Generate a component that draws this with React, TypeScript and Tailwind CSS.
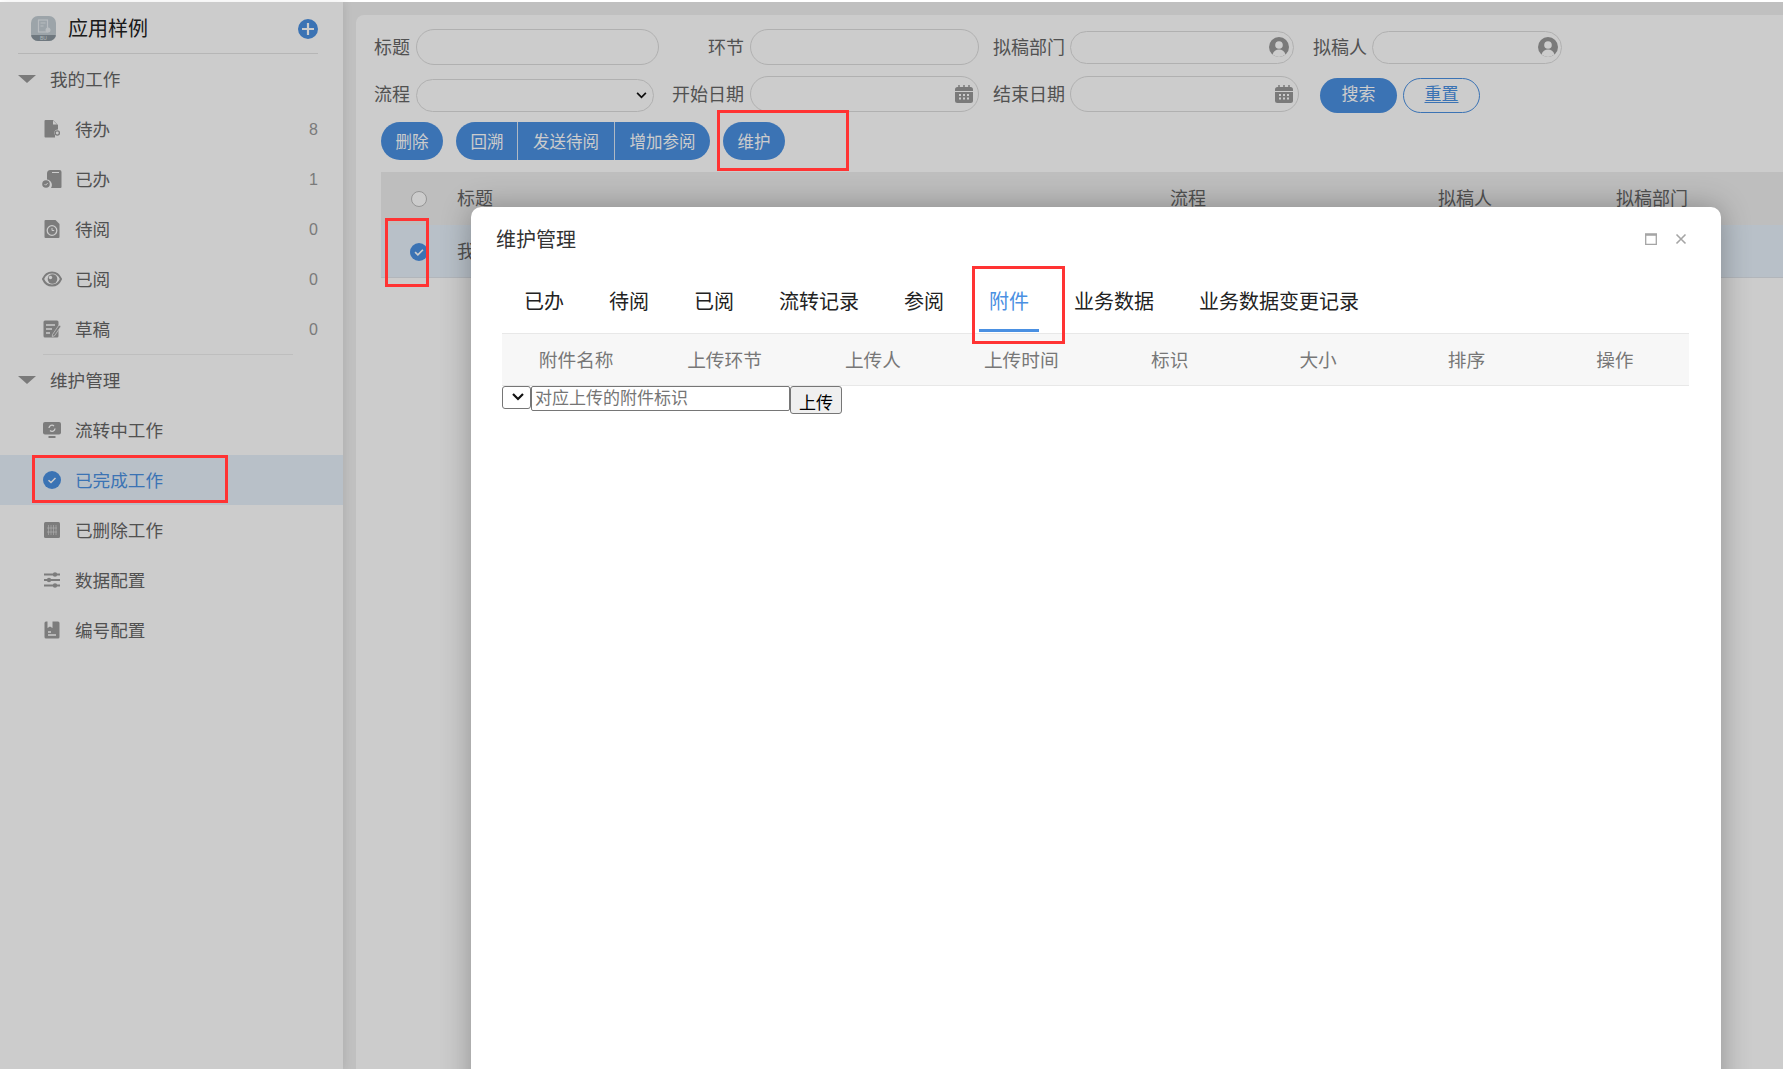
import React from "react";

function Ic({ children, className = "" }: { children: React.ReactNode; className?: string }) {
  return (
    <svg viewBox="0 0 20 20" className={"w-5 h-5 shrink-0 " + className} fill="#9c9c9c">
      {children}
    </svg>
  );
}

const icons: Record<string, React.ReactNode> = {
  todo: (
    <Ic>
      <path d="M2.500 2a1 1 0 0 1 1-1h7.500l5 5v4.500a3.400 3.400 0 0 0-3 5.500v2.500H3.500a1 1 0 0 1-1-1z" />
      <path d="M11 1.500v4h4z" fill="#fff" />
      <circle cx="15.300" cy="14" r="2.100" fill="none" stroke="#9c9c9c" strokeWidth="1.300" />
    </Ic>
  ),
  done: (
    <Ic>
      <path d="M5 4.500a3.500 3.500 0 0 1 3.500-3.500h9a2 2 0 0 1 2 2v15a1 1 0 0 1-1 1H9a5.500 5.500 0 0 0-4-8.500z" />
      <rect x="10" y="3" width="7" height="1" fill="#fff" />
      <circle cx="4" cy="15" r="3.800" />
      <path d="M2.500 15l1.200 1.200L5.700 14" stroke="#fff" fill="none" strokeWidth="0.900" />
    </Ic>
  ),
  wait: (
    <Ic>
      <path d="M2.500 2a1 1 0 0 1 1-1h10l4 4v13a1 1 0 0 1-1 1h-13a1 1 0 0 1-1-1z" />
      <circle cx="10" cy="11.500" r="4.800" fill="none" stroke="#fff" strokeWidth="1.300" />
      <path d="M10 9v2.500h2.200" fill="none" stroke="#fff" strokeWidth="1" />
    </Ic>
  ),
  read: (
    <Ic>
      <path d="M1 10c1.800-4.200 5.200-6.500 9-6.500s7.200 2.300 9 6.500c-1.800 4.200-5.200 6.500-9 6.500s-7.200-2.300-9-6.500z" fill="none" stroke="#9c9c9c" strokeWidth="2" />
      <circle cx="10.500" cy="10" r="4.800" />
      <circle cx="8.500" cy="8.500" r="1.700" fill="#fff" />
    </Ic>
  ),
  draft: (
    <Ic>
      <path d="M1.500 3a1.500 1.500 0 0 1 1.500-1.500h12A1.500 1.500 0 0 1 16.500 3v14a1.500 1.500 0 0 1-1.500 1.500H3A1.500 1.500 0 0 1 1.500 17z" />
      <path d="M4 6h9M4 10h6M4 14h4" stroke="#fff" strokeWidth="1.400" />
      <path d="M10.500 15.500l6.500-9.500 2 1.300-6.500 9.500-2.200 .8z" stroke="#fff" strokeWidth="0.700" />
    </Ic>
  ),
  flow: (
    <Ic>
      <rect x="1" y="2" width="18" height="12.500" rx="2" />
      <rect x="6.500" y="16" width="7" height="2" />
      <path d="M7 8a3 3 0 0 1 5-2M13 8.500a3 3 0 0 1-5 2" fill="none" stroke="#fff" strokeWidth="1.300" />
    </Ic>
  ),
  check: (
    <Ic>
      <circle cx="10" cy="10" r="9" fill="#4a90e2" />
      <path d="M6.500 10.200l2.500 2.300 4.500-4.500" fill="none" stroke="#fff" strokeWidth="1.500" />
    </Ic>
  ),
  trash: (
    <Ic>
      <rect x="2" y="2" width="16" height="16" rx="1.500" />
      <path d="M6.500 5v10M9 5v10M11.500 5v10M14 5v10M5 8h10M5 12h10" stroke="#d8d8d8" strokeWidth="0.700" />
    </Ic>
  ),
  sliders: (
    <Ic>
      <path d="M2 4.500h16M2 10h16M2 15.500h16" stroke="#9c9c9c" strokeWidth="1.800" />
      <circle cx="13" cy="4.500" r="2.200" />
      <circle cx="7" cy="10" r="2.200" />
      <circle cx="13" cy="15.500" r="2.200" />
    </Ic>
  ),
  number: (
    <Ic>
      <path d="M2.500 3a1.500 1.500 0 0 1 1.500-1.500h1.500V8l2.500-1.500L10.500 8V1.500h5.500A1.500 1.500 0 0 1 17.500 3v14a1.500 1.500 0 0 1-1.500 1.500H4A1.500 1.500 0 0 1 2.500 17z" />
      <path d="M6 12h3M6 15h8" stroke="#fff" strokeWidth="1.300" />
    </Ic>
  ),
};

function Caret() {
  return <div className="w-0 h-0 border-x-[9px] border-x-transparent border-t-[8px] border-t-[#999]" />;
}

function GroupHead({ label }: { label: string }) {
  return (
    <div className="h-[50px] flex items-center pl-[18px] gap-[14px] text-[17.6px] text-[#666]">
      <Caret />
      <span className="pt-[2px]">{label}</span>
    </div>
  );
}

function SideItem({ icon, label, count, active }: { icon: string; label: string; count?: string; active?: boolean }) {
  return (
    <div
      className={
        "h-[50px] flex items-center pl-[42px] pr-[25px] gap-[13px] text-[17.6px] " +
        (active ? "bg-[#e6f0fb] text-[#4a90e2]" : "text-[#666]")
      }
    >
      {icons[icon]}
      <span className="flex-1 pt-[2px]">{label}</span>
      {count && <span className="pt-[2px] text-[16px] text-[#999]">{count}</span>}
    </div>
  );
}

function Sidebar() {
  return (
    <aside className="w-[343px] shrink-0 bg-white shadow-[2px_0_8px_rgba(0,0,0,0.08)] z-10">
      <div className="ml-[18px] mr-[25px] h-[52px] pt-[2px] flex items-center border-b border-[#e4e4e4]">
        <div className="ml-[13px] w-[25px] h-[25px] rounded-[7px] bg-[#c3cdd4] overflow-hidden flex flex-col items-center justify-end">
          <svg viewBox="0 0 14 15" className="w-[14px] h-[15px] mb-[1px]">
            <rect x="1.500" y="1" width="9" height="12" fill="none" stroke="#e6ecef" strokeWidth="1.200" />
            <path d="M3.500 4h5M3.500 7h3" stroke="#e6ecef" strokeWidth="1" />
            <circle cx="11" cy="11" r="2.500" fill="#e6ecef" />
          </svg>
          <div className="w-full h-[6px] bg-[#8b979f] text-[5px] leading-[6px] text-center text-[#dfe5e9]">BU</div>
        </div>
        <span className="ml-[12px] flex-1 text-[20px] text-[#222]">应用样例</span>
        <svg viewBox="0 0 20 20" className="w-5 h-5">
          <circle cx="10" cy="10" r="10" fill="#4a90e2" />
          <path d="M10 4v12M4 10h12" stroke="#fff" strokeWidth="2.200" />
        </svg>
      </div>
      <GroupHead label="我的工作" />
      <SideItem icon="todo" label="待办" count="8" />
      <SideItem icon="done" label="已办" count="1" />
      <SideItem icon="wait" label="待阅" count="0" />
      <SideItem icon="read" label="已阅" count="0" />
      <SideItem icon="draft" label="草稿" count="0" />
      <div className="ml-[43px] mr-[50px] border-t border-[#eee]" />
      <GroupHead label="维护管理" />
      <SideItem icon="flow" label="流转中工作" />
      <SideItem icon="check" label="已完成工作" active />
      <SideItem icon="trash" label="已删除工作" />
      <SideItem icon="sliders" label="数据配置" />
      <SideItem icon="number" label="编号配置" />
    </aside>
  );
}

function Person() {
  return (
    <svg viewBox="0 0 20 20" className="w-5 h-5 shrink-0">
      <circle cx="10" cy="10" r="10" fill="#999" />
      <circle cx="10" cy="8" r="3.800" fill="#fff" />
      <path d="M3.500 17.500c1-3.500 3.500-5 6.500-5s5.500 1.500 6.500 5a10 10 0 0 1-13 0z" fill="#fff" />
    </svg>
  );
}

function Calendar() {
  return (
    <svg viewBox="0 0 20 20" className="w-5 h-5 shrink-0">
      <rect x="1" y="3" width="18" height="16" rx="2.500" fill="#999" />
      <path d="M5 1v4M10 1v4M15 1v4" stroke="#999" strokeWidth="1.500" />
      <path d="M1 7.500h18" stroke="#fff" strokeWidth="1" />
      <path d="M5 11h2M9 11h2M13 11h2M5 14.500h2M9 14.500h2M13 14.500h2" stroke="#fff" strokeWidth="1.800" />
    </svg>
  );
}

function Field({ label, labelW, inputW, icon }: { label: string; labelW: string; inputW: string; icon?: React.ReactNode }) {
  return (
    <div className="flex items-center">
      <span className={labelW + " pt-[2px] text-right text-[18px] text-[#666] mr-[6px] whitespace-nowrap"}>{label}</span>
      <div className={inputW + " h-[33px] rounded-[18px] border border-[#ddd] flex items-center justify-end pr-[3px] bg-white"}>
        {icon}
      </div>
    </div>
  );
}

function Btn({ children, cls }: { children: React.ReactNode; cls: string }) {
  return <div className={"h-[38px] pt-[2px] bg-[#4a90e2] text-white text-[16.5px] flex items-center justify-center " + cls}>{children}</div>;
}

function Main() {
  return (
    <main className="flex-1 min-w-0 bg-[#f0f0f0] pl-[13px] pt-[13px]">
      <div className="h-full bg-white rounded-tl-[8px] pt-[14px]">
        {/* search row 1 */}
        <div className="flex items-center h-[36px] pl-[18px]">
          <span className="w-[36px] pt-[2px] text-[18px] text-[#666] mr-[6px]">标题</span>
          <div className="w-[243px] h-[36px] rounded-[18px] border border-[#ddd]" />
          <span className="ml-[50px] w-[36px] pt-[2px] text-[18px] text-[#666] mr-[5px] -translate-x-[1px]">环节</span>
          <div className="w-[229px] h-[36px] rounded-[18px] border border-[#ddd]" />
          <div className="ml-[14px]">
            <Field label="拟稿部门" labelW="w-[71px]" inputW="w-[224px] pr-[4px]" icon={<Person />} />
          </div>
          <div className="ml-[19px]">
            <Field label="拟稿人" labelW="w-[53px]" inputW="w-[190px]" icon={<Person />} />
          </div>
        </div>
        {/* search row 2 */}
        <div className="flex items-center h-[36px] pl-[18px] mt-[11px]">
          <span className="w-[36px] pt-[2px] text-[18px] text-[#666] mr-[6px]">流程</span>
          <div className="w-[238px] h-[33px] rounded-[17px] border border-[#ddd] flex items-center justify-end pr-[4px] mt-[2px]">
            <svg viewBox="0 0 12 8" className="w-[11px] h-[7px] mr-[2px]">
              <path d="M1 1l5 5 5-5" fill="none" stroke="#111" strokeWidth="2" />
            </svg>
          </div>
          <span className="ml-[18px] w-[72px] pt-[2px] text-[18px] text-[#666] mr-[6px] whitespace-nowrap">开始日期</span>
          <div className="w-[229px] h-[36px] rounded-[18px] border border-[#ddd] flex items-center justify-end pr-[4px]">
            <Calendar />
          </div>
          <span className="ml-[14px] w-[71px] pt-[2px] text-[18px] text-[#666] mr-[6px] whitespace-nowrap">结束日期</span>
          <div className="w-[229px] h-[36px] rounded-[18px] border border-[#ddd] flex items-center justify-end pr-[4px]">
            <Calendar />
          </div>
          <div className="ml-[21px] mt-[2px] w-[77px] h-[35px] rounded-[18px] bg-[#4a90e2] text-white text-[17px] flex items-center justify-center">搜索</div>
          <div className="ml-[6px] mt-[2px] w-[77px] h-[35px] rounded-[18px] border border-[#4a90e2] text-[#4a90e2] text-[17px] flex items-center justify-center underline underline-offset-2 decoration-1">重置</div>
        </div>
        {/* actions */}
        <div className="flex items-center pl-[25px] mt-[10px]">
          <Btn cls="w-[62px] rounded-[19px]">删除</Btn>
          <div className="flex ml-[13px] rounded-[19px] overflow-hidden">
            <Btn cls="w-[61px] pl-[1px]">回溯</Btn>
            <Btn cls="w-[97px] border-l border-[#dce8f5]">发送待阅</Btn>
            <Btn cls="w-[96px] border-l border-[#dce8f5]">增加参阅</Btn>
          </div>
          <Btn cls="ml-[13px] w-[62px] rounded-[19px]">维护</Btn>
        </div>
        {/* table */}
        <div className="ml-[25px] mt-[12px] text-[18px] text-[#666]">
          <div className="h-[53px] bg-[#eeeeee] flex items-center">
            <span className="ml-[30px] w-4 h-4 rounded-full border border-[#bbb] bg-white" />
            <span className="ml-[30px] pt-[2px] w-[713px]">标题</span>
            <span className="pt-[2px] w-[268px]">流程</span>
            <span className="pt-[2px] w-[178px]">拟稿人</span>
            <span className="pt-[2px]">拟稿部门</span>
          </div>
          <div className="h-[53px] pt-[2px] bg-[#e6f0fb] flex items-center border-b border-[#dfe4ea]">
            <svg viewBox="0 0 16 16" className="ml-[29px] w-[18px] h-[18px]">
              <circle cx="8" cy="8" r="8" fill="#4a90e2" />
              <path d="M4.500 8.200l2.500 2.300 4.500-4.500" fill="none" stroke="#fff" strokeWidth="1.500" />
            </svg>
            <span className="ml-[29px]">我的样例</span>
          </div>
        </div>
      </div>
    </main>
  );
}

const tabs = ["已办", "待阅", "已阅", "流转记录", "参阅", "附件", "业务数据", "业务数据变更记录"];
const cols = ["附件名称", "上传环节", "上传人", "上传时间", "标识", "大小", "排序", "操作"];

function Modal() {
  return (
    <div className="absolute left-[471px] top-[205px] w-[1250px] h-[900px] bg-white rounded-[10px] shadow-[0_0_30px_rgba(0,0,0,0.3)]">
      <div className="h-[64px] flex items-center pl-[25px] pr-[34px] text-[20px] text-[#333]">
        <span className="flex-1 pt-[2px]">维护管理</span>
        <svg viewBox="0 0 12 12" className="w-3 h-3 -mt-[1px]">
          <path d="M.7 1.500h10.600v10H.7z" fill="none" stroke="#a5a5a5" strokeWidth="1.300" />
          <path d="M0 1.500h12" stroke="#a5a5a5" strokeWidth="2.400" />
        </svg>
        <svg viewBox="0 0 12 12" className="w-3 h-3 ml-[18px] -mt-[1px]">
          <path d="M1.500 1.500l9 9M10.500 1.500l-9 9" stroke="#a5a5a5" strokeWidth="1.600" />
        </svg>
      </div>
      <div className="ml-[31px] mr-[32px]">
        <div className="flex gap-[25px] pl-[12px] h-[62px]">
          {tabs.map((t) => (
            <div
              key={t}
              className={
                "h-[61px] px-[10px] pt-[16px] text-[20px] leading-[30px] whitespace-nowrap " +
                (t === "附件" ? "text-[#4a90e2] border-b-[3px] border-[#4a90e2]" : "text-[#222]")
              }
            >
              {t}
            </div>
          ))}
        </div>
        <div className="grid grid-cols-8 h-[53px] pt-[4px] bg-[#f7f7f7] border-y border-[#e8e8e8] items-center text-[18.7px] text-[#777] text-center">
          {cols.map((c) => (
            <span key={c}>{c}</span>
          ))}
        </div>
        <div className="flex items-start">
          <div className="relative w-[29px] h-[23px]">
            <select className="appearance-none w-full h-full border border-[#767676] rounded-[3px] bg-white" />
            <svg viewBox="0 0 12 8" className="absolute left-[10px] top-[7px] w-[12px] h-[8px] pointer-events-none">
              <path d="M1 1l5 5 5-5" fill="none" stroke="#111" strokeWidth="2.200" />
            </svg>
          </div>
          <input
            placeholder="对应上传的附件标识"
            className="w-[259px] h-[25px] border border-[#767676] rounded-[2px] pl-[3px] text-[17px] placeholder:text-[#757575]"
          />
          <button className="w-[52px] h-[28px] pt-[4px] border border-[#767676] rounded-[3px] bg-[#efefef] text-[17px] text-black">上传</button>
        </div>
      </div>
    </div>
  );
}

function RedBox({ cls }: { cls: string }) {
  return <div className={"absolute border-[3px] border-[#ff3333] pointer-events-none " + cls} />;
}

export default function App() {
  return (
    <div className="w-[1783px] h-[1069px] overflow-hidden bg-white pt-[2px] [font-family:'Liberation_Sans','Noto_Sans_CJK_SC',sans-serif]">
      <div className="relative h-[1067px] flex">
        <Sidebar />
        <Main />
        <div className="absolute inset-0 bg-black/20 z-20" />
        <div className="absolute inset-0 z-30">
          <Modal />
          <RedBox cls="left-[32px] top-[453px] w-[196px] h-[48px]" />
          <RedBox cls="left-[717px] top-[108px] w-[132px] h-[61px]" />
          <RedBox cls="left-[385px] top-[216px] w-[44px] h-[69px]" />
          <RedBox cls="left-[972px] top-[264px] w-[93px] h-[78px]" />
        </div>
      </div>
    </div>
  );
}
